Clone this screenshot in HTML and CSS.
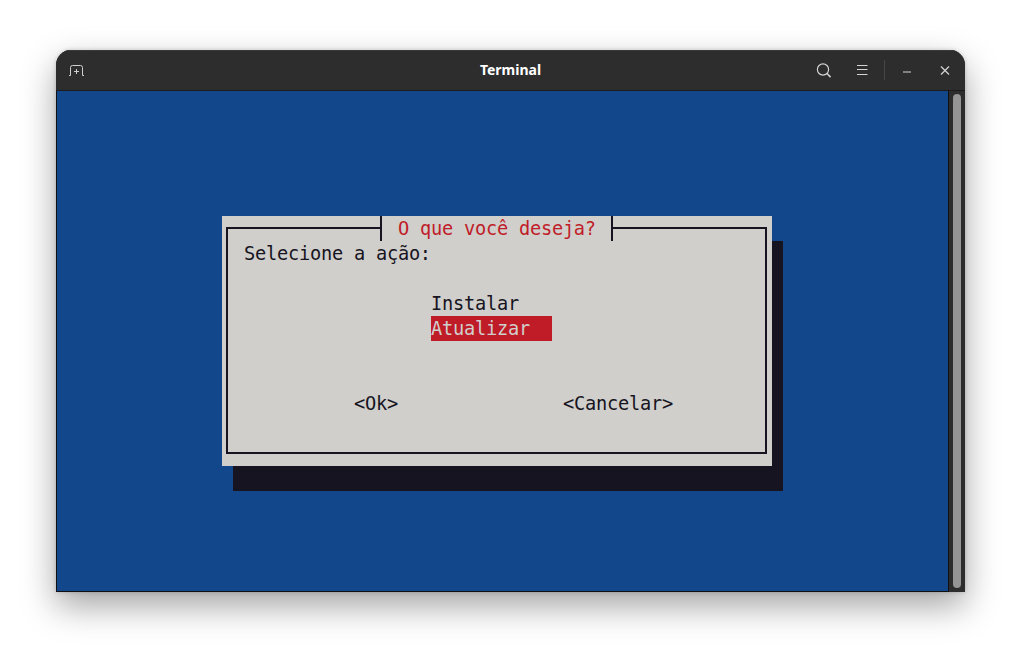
FILE: index.html
```html
<!DOCTYPE html>
<html lang="pt">
<head>
<meta charset="utf-8">
<title>Terminal</title>
<link rel="stylesheet" href="styles.css">
</head>
<body>
<div class="window">
  <header class="titlebar">
    <div class="tb-left">
      <svg class="icon" width="16" height="12" viewBox="0 0 16 12" fill="none" stroke="#cfcfcf" stroke-width="1"><path d="M0 11.5H1.5V3.5Q1.5 1.5 3.5 1.5H11.5Q13.5 1.5 13.5 3.5V11.5H15"/><path d="M7.5 5V10M5 7.5H10"/></svg>
    </div>
    <div class="tb-title">Terminal</div>
    <div class="tb-right">
      <svg class="icon search" width="16" height="16" viewBox="0 0 16 16" fill="none" stroke="#d4d4d4" stroke-width="1.2"><circle cx="7" cy="7.5" r="5.6"/><path d="M11 11.5L14.6 15.1" stroke-width="1.5"/></svg>
      <svg class="icon menu" width="12" height="10" viewBox="0 0 12 10" fill="none" stroke="#d4d4d4" stroke-width="1"><path d="M1 .5H11.5M1 4.5H11.5M1 9.5H11.5"/></svg>
      <span class="sep"></span>
      <svg class="icon min" width="8" height="2" viewBox="0 0 8 2" fill="none" stroke="#d4d4d4" stroke-width="1"><path d="M0 1H8"/></svg>
      <svg class="icon close" width="10" height="10" viewBox="0 0 10 10" fill="none" stroke="#d4d4d4" stroke-width="1.2"><path d="M1 1.5L9 9.5M9 1.5L1 9.5"/></svg>
    </div>
  </header>
  <main class="body">
    <section class="screen">
      <div class="dialog">
        <div class="frame"></div>
        <div class="title">O que você deseja?</div>
        <div class="prompt">Selecione a ação:</div>
        <div class="item item-1">Instalar</div>
        <div class="item item-2 selected">Atualizar</div>
        <div class="btn btn-ok">&lt;Ok&gt;</div>
        <div class="btn btn-cancel">&lt;Cancelar&gt;</div>
      </div>
    </section>
    <aside class="scrollbar"><div class="thumb"></div></aside>
  </main>
</div>
</body>
</html>
```
FILE: styles.css
```css
* { box-sizing: border-box; }
html, body { margin: 0; height: 100%; }
body {
  background: #fff;
  padding: 50px 56px 62px;
  overflow: hidden;
}
.window {
  width: 909px;
  height: 542px;
  background: #2d2d2d;
  border-radius: 15px 15px 0 0;
  box-shadow: 0 14px 34px rgba(0,0,0,.36), 0 0 4px rgba(0,0,0,.18);
  display: flex;
  flex-direction: column;
  overflow: hidden;
}
.titlebar {
  height: 41px;
  flex: none;
  position: relative;
  display: flex;
  align-items: center;
  justify-content: space-between;
  background: #2d2d2d;
  border-top: 1px solid #3a3a3a;
  border-bottom: 1px solid #1c1c1c;
  padding: 0 15px 1px 13px;
}
.icon { display: block; flex: none; }
.tb-title {
  position: absolute;
  left: 0; right: 0; top: 0; bottom: 3px;
  display: flex;
  align-items: center;
  justify-content: center;
  color: #fff;
  font: 700 14px "Noto Sans", sans-serif;
}
.tb-right { display: flex; align-items: center; position: relative; }
.menu { margin-left: 24px; }
.sep { width: 1px; height: 20px; background: #464646; margin-left: 16px; }
.min { margin: 4px 0 0 18px; }
.close { margin-left: 29px; }
.body { flex: 1; display: flex; min-height: 0; }
.screen {
  flex: 1;
  background: #12488b;
  border: solid #111;
  border-width: 0 1px 1px 1px;
  padding: 125px 0 0 165px;
}
.dialog {
  width: 550px;
  height: 250px;
  background: #d0cfcc;
  box-shadow: 11px 25px 0 #171421;
  display: grid;
  grid-template-columns: repeat(50, 11px);
  grid-template-rows: repeat(10, 25px);
  color: #171421;
  font: 18.67px/25px "DejaVu Sans Mono", monospace;
  letter-spacing: -0.24px;
  white-space: pre;
}
.frame {
  grid-column: 1 / -1;
  grid-row: 1 / -1;
  margin: 11px 5px 12px 4px;
  border: 2px solid #171421;
}
.title {
  grid-column: 15 / 37;
  grid-row: 1;
  margin: 0 5px 0 4px;
  padding-left: 16px;
  background: #d0cfcc;
  border: solid #171421;
  border-width: 0 2px;
  color: #c01c28;
}
.prompt { grid-column: 3 / 25; grid-row: 2; }
.item { grid-column: 20 / 31; }
.item-1 { grid-row: 4; }
.item-2 { grid-row: 5; }
.selected { background: #c01c28; color: #d0cfcc; }
.btn { grid-row: 8; }
.btn-ok { grid-column: 13 / 19; }
.btn-cancel { grid-column: 32 / 44; }
.scrollbar {
  width: 16px;
  flex: none;
  background: #2d2d2d;
  padding: 3px 4px 4px;
}
.thumb {
  height: 100%;
  background: #959595;
  border-radius: 4px;
}
```
